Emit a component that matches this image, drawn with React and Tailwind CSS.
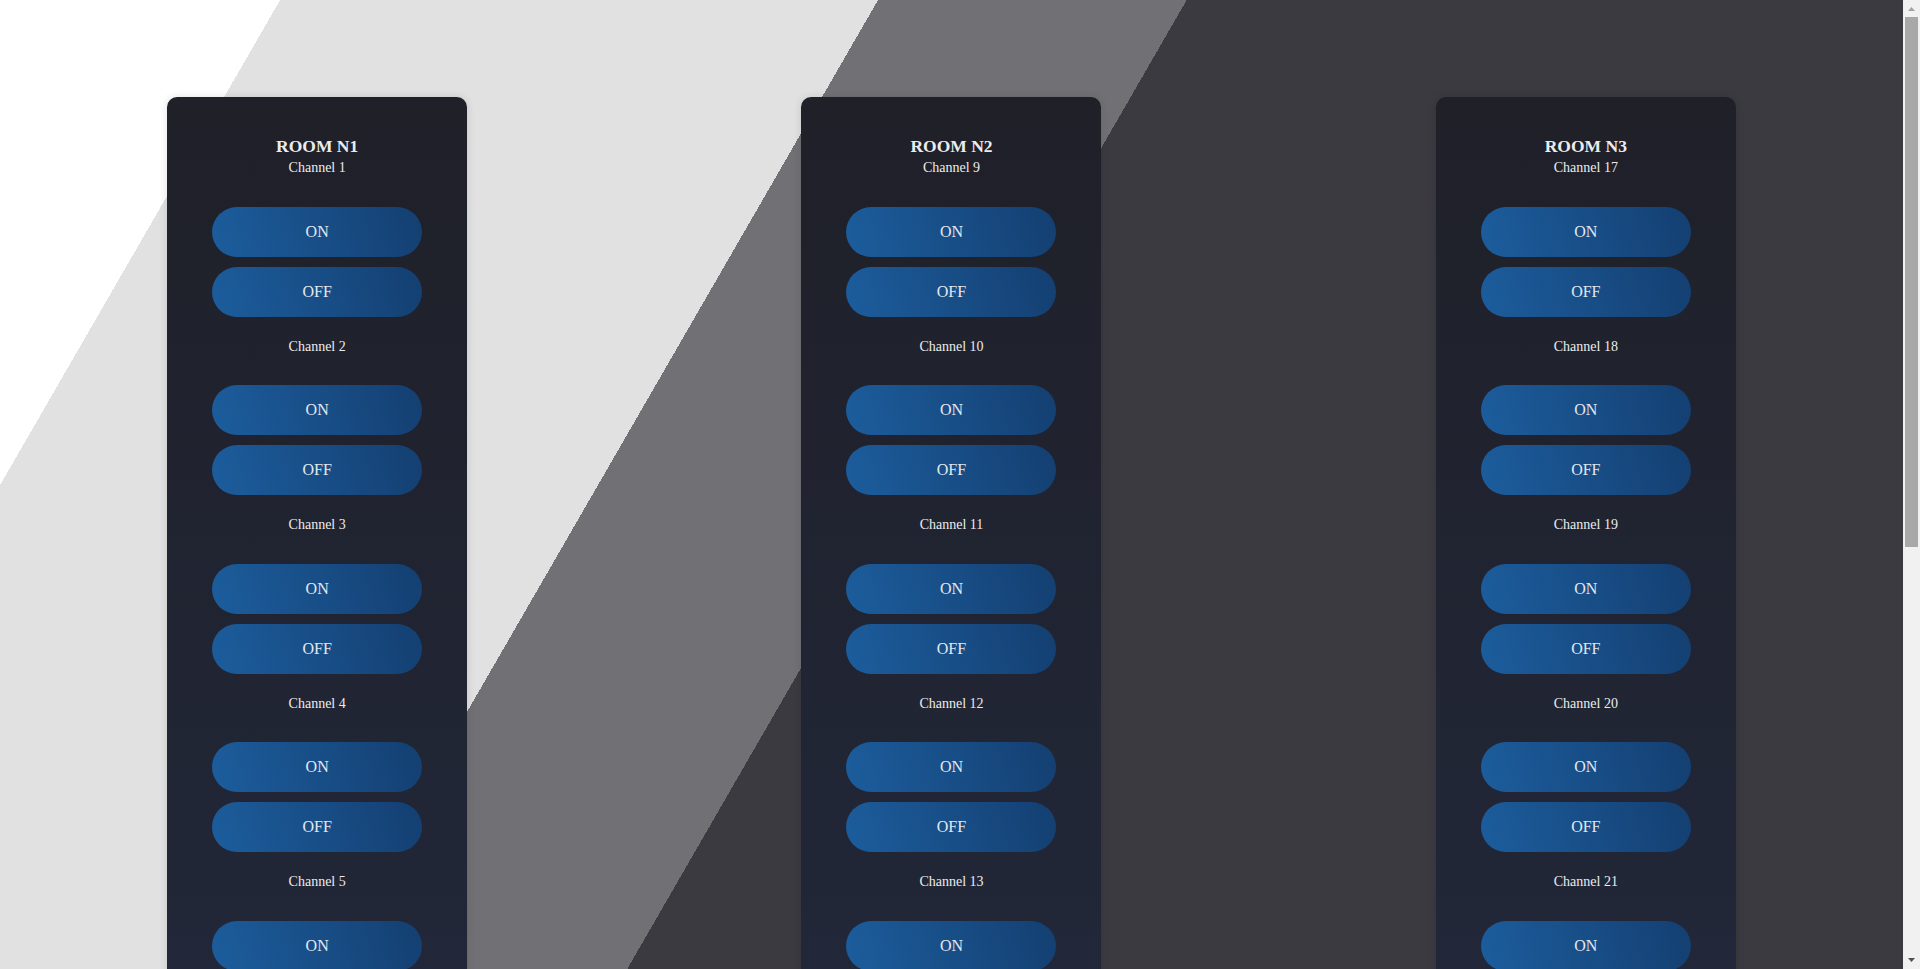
const ROOMS = [
    { name: 'ROOM N1', start: 1 },
    { name: 'ROOM N2', start: 9 },
    { name: 'ROOM N3', start: 17 },
]

function Channel({ num, first }) {
    return (
        <div className="flex flex-col items-center">
            <p className={`${first ? 'mt-[3px]' : 'mt-[22px]'} text-[14px] leading-[15px] text-[#ececec]`}>
                Channel {num}
            </p>
            <button className="mt-[31.6px] w-[210px] h-[50px] rounded-full bg-[linear-gradient(75deg,#1c5d9d,#143f71)] text-[16px] text-[#e4e8ee]">
                ON
            </button>
            <button className="mt-[10px] w-[210px] h-[50px] rounded-full bg-[linear-gradient(75deg,#1c5d9d,#143f71)] text-[16px] text-[#e4e8ee]">
                OFF
            </button>
        </div>
    )
}

function RoomCard({ room }) {
    const channels = Array.from({ length: 8 }, (_, i) => room.start + i)
    return (
        <div className="w-[300px] shrink-0 rounded-[10px] pt-[38px] pb-[40px] bg-[linear-gradient(to_bottom,#1f2028,#232c45)] shadow-[0_0_8px_rgba(0,0,0,0.12)]">
            <h3 className="text-center text-[17.5px] leading-[22px] font-bold text-[#ececec]">{room.name}</h3>
            {channels.map((c, i) => (
                <Channel key={c} num={c} first={i === 0} />
            ))}
        </div>
    )
}

// imitation of the browser scrollbar seen in the screenshot
function Scrollbar() {
    return (
        <div className="w-[17px] shrink-0 h-full bg-[#f1f1f1] flex flex-col items-center">
            <svg width="17" height="17" viewBox="0 0 17 17" className="shrink-0">
                <path d="M5 11 L8.5 7 L12 11 Z" fill="#a3a3a3" />
            </svg>
            <div className="w-[13px] h-[530px] bg-[#a8a8a8] mt-[0.3px]" />
            <div className="flex-1" />
            <svg width="17" height="17" viewBox="0 0 17 17" className="shrink-0">
                <path d="M5 6 L8.5 10 L12 6 Z" fill="#505050" />
            </svg>
        </div>
    )
}

export default function App() {
    return (
        <div className="flex h-screen overflow-hidden font-['Liberation_Serif','Times_New_Roman',serif]">
            <div className="flex-1 min-w-0 overflow-hidden bg-[linear-gradient(120deg,#ffffff_242.6px,#e1e1e1_242.6px,#e1e1e1_760.4px,#717175_760.4px,#717175_1027.7px,#3a3a40_1027.7px)]">
                <div className="flex justify-around items-start pt-[97px] pb-[97px]">
                    {ROOMS.map((r) => (
                        <RoomCard key={r.name} room={r} />
                    ))}
                </div>
            </div>
            <Scrollbar />
        </div>
    )
}
